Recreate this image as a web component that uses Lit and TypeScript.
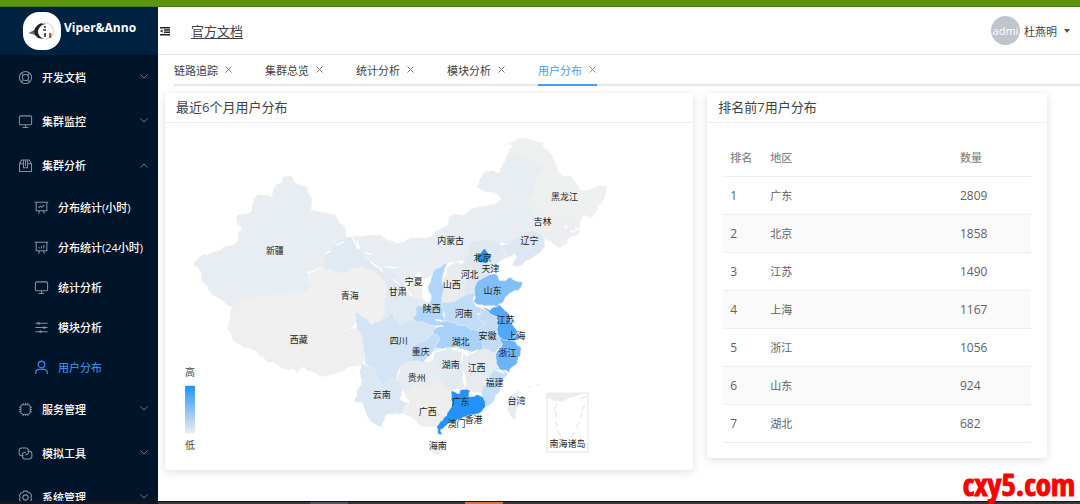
import { LitElement, html, css, svg, nothing } from "lit";
import { customElement, state } from "lit/decorators.js";
import { classMap } from "lit/directives/class-map.js";

type Point = [number, number];

const ICONS: Record<string, unknown> = {
  help: svg`<circle cx="8" cy="8" r="6.5"/><circle cx="8" cy="8" r="3.3"/><path d="M3.6 3.4l2 2M12.4 3.4l-2 2M3.6 12.6l2-2M12.4 12.6l-2-2"/>`,
  monitor: svg`<rect x="1.5" y="2" width="13" height="9.5" rx="1.5"/><path d="M8 11.5v2.5M5 14.3h6"/>`,
  box: svg`<path d="M1.6 6.2L4 2.2h8l2.400 4v8.100H1.600zM1.600 6.200h4.200M10.200 6.200h4.200M5.800 2.400v8h4.400v-8M8 2.400v6"/>`,
  line: svg`<path d="M.8 2.500h14.400M2.300 2.500v9h11.400v-9M6 11.700L4.800 14.500M10 11.700l1.200 2.800M4.800 8.500l2-2 1.700 1.300L11 5.200"/>`,
  bars: svg`<path d="M.8 2.500h14.400M2.300 2.500v9h11.400v-9M6 11.700L4.800 14.500M10 11.700l1.200 2.800M5.500 9V7.500M8 9V6.500M10.500 9V5.200"/>`,
  sliders: svg`<path d="M1.500 3.500h13M1.500 8h13M1.500 12.500h13"/><path d="M5 2.300v2.400M11 6.800v2.400M7 11.300v2.400" stroke-width="2.200"/>`,
  user: svg`<circle cx="8" cy="4.800" r="3.500"/><path d="M1.800 14.800v-1.300c0-2 1.600-3.600 3.600-3.600h5.200c2 0 3.600 1.600 3.600 3.600v1.300"/>`,
  chip: svg`<rect x="3" y="3" width="10" height="10" rx="2"/><path d="M5.500 3V1M8 3V1M10.500 3V1M5.500 15v-2M8 15v-2M10.500 15v-2M3 5.500H1M3 8H1M3 10.500H1M15 5.500h-2M15 8h-2M15 10.500h-2"/>`,
  link: svg`<path d="M6 10.300H4A2.800 2.800 0 0 1 1.200 7.500V5A2.800 2.800 0 0 1 4 2.200h4.500A2.800 2.800 0 0 1 11.300 5v1.500A2.800 2.800 0 0 1 8.500 9.300H7.800"/><path d="M10 5.700h2a2.800 2.800 0 0 1 2.800 2.800V11a2.800 2.800 0 0 1-2.800 2.800H7.500A2.800 2.800 0 0 1 4.700 11V9.500a2.800 2.800 0 0 1 2.800-2.800h.7"/>`,
  gear: svg`<path d="M5.300 2.600L6.200 1.200h3.600l.9 1.400 1.900.2 1.900 3-.7 2.200.7 2.200-1.900 3-1.900.2-.9 1.400H6.200l-.9-1.400-1.900-.2-1.900-3L2.200 8l-.7-2.200 1.900-3z"/><circle cx="8" cy="8" r="2.800"/>`,
};

interface Item { label: string; icon: string; children?: Item[]; active?: boolean }

const MENU: Item[] = [
  { label: "开发文档", icon: "help" },
  { label: "集群监控", icon: "monitor" },
  {
    label: "集群分析", icon: "box", children: [
      { label: "分布统计(小时)", icon: "line" },
      { label: "分布统计(24小时)", icon: "bars" },
      { label: "统计分析", icon: "monitor" },
      { label: "模块分析", icon: "sliders" },
      { label: "用户分布", icon: "user", active: true },
    ],
  },
  { label: "服务管理", icon: "chip" },
  { label: "模拟工具", icon: "link" },
  { label: "系统管理", icon: "gear" },
];

const TABS = ["链路追踪", "集群总览", "统计分析", "模块分析", "用户分布"];

const ROWS: [string, number][] = [
  ["广东", 2809], ["北京", 1858], ["江苏", 1490], ["上海", 1167],
  ["浙江", 1056], ["山东", 924], ["湖北", 682],
];

// name, fill, outline
const REGIONS: [string, string, string][] = [
  ["新疆", "#e8edf1", "283,177 290,176 295,183 308,188 312,198 310,211 323,212 337,217 343,225 347,236 337,243 325,255 321,267 308,273 312,287 308,292 290,292 262,296 243,299 235,309 225,303 212,295 208,288 202,282 201,272 194,265 200,257 210,254 223,248 238,241 238,235 242,230 237,216 252,212 254,202 257,196 273,197 275,187 282,183"],
  ["西藏", "#efefef", "232,308 243,299 262,296 290,292 300,293 303,303 303,317 320,322 343,333 357,328 363,337 365,357 362,367 357,365 348,368 340,372 325,377 313,372 302,367 298,373 295,369 280,367 263,357 248,348 233,340 227,328 230,318"],
  ["青海", "#f0f0f0", "308,273 321,268 347,273 362,267 377,273 388,285 387,290 385,308 382,320 372,325 363,317 357,312 355,325 343,333 320,322 303,317 303,303 300,293 308,292 312,287"],
  ["甘肃", "#e1eaf2", "345,237 355,237 361,250 372,262 385,268 397,275 405,285 408,292 414,298 424,300 430,303 417,307 413,320 400,325 392,313 382,320 385,308 387,290 388,285 377,273 362,267 347,273 321,267 325,255 337,243"],
  ["内蒙古", "#e8edf1", "355,236 383,237 400,243 417,238 433,237 450,225 449,217 455,214 463,216 480,207 502,200 493,192 478,188 485,172 500,173 510,152 518,155 537,163 545,168 537,177 533,195 528,202 533,210 535,222 533,230 527,233 510,245 500,242 488,238 480,241 470,243 465,262 447,263 435,270 425,280 420,270 413,277 405,285 397,275 385,268 372,262 361,250"],
  ["黑龙江", "#eeefef", "508,143 523,138 543,143 553,157 558,173 573,178 580,190 597,187 607,186 602,203 593,217 583,215 580,223 565,219 548,216 533,210 528,202 533,195 537,177 545,168 537,163 518,155 509,151 513,146"],
  ["吉林", "#eceef0", "533,210 548,216 565,219 580,223 580,233 570,237 562,247 557,247 543,237 533,230 535,222"],
  ["辽宁", "#dce7f2", "533,230 543,237 545,247 533,258 517,267 513,265 518,257 515,253 507,258 502,247 510,245 527,233"],
  ["河北", "#e0e8ef", "470,243 480,241 488,238 500,242 502,247 506,258 498,263 492,272 488,276 480,280 475,292 463,297 465,272 460,265 465,262"],
  ["北京", "#258ff5", "485,249 489,254 492,256 489,259 488,263 481,263 475,258 480,254"],
  ["天津", "#dce7f1", "488,263 493,265 492,272 487,270"],
  ["山西", "#e8ecef", "447,267 460,263 465,272 463,297 455,302 442,303 443,285"],
  ["陕西", "#b0d5fa", "447,263 444,273 443,285 442,303 445,320 437,327 425,323 413,320 417,307 430,303 432,297 428,287 435,270"],
  ["宁夏", "#edeff0", "410,281 415,276 418,284 423,291 424,300 414,298 408,290"],
  ["山东", "#82bef8", "475,292 480,280 488,276 497,275 500,281 506,281 512,278 523,283 522,286 513,292 503,303 497,307 480,305 474,302"],
  ["河南", "#c1dcf6", "442,303 455,302 463,297 475,293 474,302 481,308 478,318 487,324 478,331 467,326 445,321"],
  ["江苏", "#52a7f8", "483,306 493,308 500,305 510,315 515,328 518,333 510,340 500,338 498,327 497,317 489,312"],
  ["上海", "#5aabf7", "518,333 521,338 514,341 510,340"],
  ["安徽", "#c3dcf4", "481,308 489,312 497,317 498,327 500,338 503,344 495,354 483,350 478,340 478,330 487,324 478,318"],
  ["湖北", "#a9d2fa", "437,327 445,321 467,326 478,331 483,350 470,352 450,348 435,349 440,340 433,333"],
  ["浙江", "#6cb4f8", "500,338 510,340 521,347 521,355 518,363 510,373 500,370 495,357 503,344"],
  ["福建", "#c3def6", "497,367 500,370 508,374 500,392 488,407 485,402 482,393 488,378"],
  ["江西", "#e8ebed", "467,357 470,352 483,350 495,354 497,367 488,378 482,393 471,391 465,392 463,370"],
  ["湖南", "#e3eaf1", "435,350 450,348 462,352 467,357 463,370 464,389 450,392 442,383 435,367"],
  ["重庆", "#c2dcf5", "410,350 420,343 433,333 440,340 435,349 428,357 423,363 413,362"],
  ["四川", "#d3e4f4", "357,312 363,317 372,325 382,320 392,313 400,325 413,320 425,323 437,327 433,333 420,343 410,350 413,362 400,368 397,378 383,385 375,370 365,362 365,357 363,337 357,328"],
  ["贵州", "#e7ecf1", "400,368 413,362 423,363 435,360 435,367 442,383 420,388 406,395 398,383"],
  ["云南", "#dbe7f2", "362,363 375,370 383,385 397,378 403,390 400,398 410,403 403,413 385,417 383,427 373,423 367,415 363,403 355,402 357,392 362,385"],
  ["广西", "#eeeeee", "406,395 420,388 442,383 450,392 453,403 447,417 438,425 420,425 412,417 403,411 410,403"],
  ["广东", "#2492fb", "452,391 460,394 461,390 471,391 469,397 478,395 484,398 486,407 482,412 474,415 466,417 454,423 445,427 441,430 443,435 438,434 437,427 447,416 452,407"],
  ["海南", "#ebeef0", "430,446 437,441 446,441 444,449 438,455 431,452"],
  ["台湾", "#e6ebef", "518,390 520,394 515,420 508,409 511,398"],
];

const LABELS: [string, number, number][] = [
  ["新疆", 275, 251], ["西藏", 299, 340], ["青海", 350, 296], ["甘肃", 398, 292],
  ["宁夏", 414, 282], ["内蒙古", 451, 241], ["黑龙江", 565, 197], ["吉林", 543, 222],
  ["辽宁", 530, 241], ["北京", 483, 258], ["天津", 491, 269], ["河北", 470, 275],
  ["山西", 452, 285], ["山东", 493, 291], ["陕西", 432, 309], ["河南", 464, 314],
  ["江苏", 506, 320], ["安徽", 488, 336], ["上海", 517, 336], ["湖北", 461, 342],
  ["四川", 399, 341], ["重庆", 421, 352], ["浙江", 508, 353], ["湖南", 451, 365],
  ["江西", 477, 368], ["贵州", 417, 378], ["福建", 495, 383], ["云南", 382, 395],
  ["台湾", 517, 401], ["广东", 461, 402], ["广西", 428, 412], ["香港", 474, 420],
  ["澳门", 457, 424], ["海南", 438, 446], ["南海诸岛", 568, 444],
];

// Subdivides an edge with a displacement that depends only on its midpoint,
// so neighbouring regions keep a common border.
function roughen(a: Point, b: Point, depth: number): Point[] {
  const mx = (a[0] + b[0]) / 2;
  const my = (a[1] + b[1]) / 2;
  const len = Math.hypot(a[0] - b[0], a[1] - b[1]);
  if (depth === 0 || len < 3) return [a];
  const amp = Math.min(len * 0.13, 1.4);
  const mid: Point = [mx + Math.sin(mx * 12.9 + my * 7.3) * amp, my + Math.cos(mx * 5.7 + my * 11.1) * amp];
  return [...roughen(a, mid, depth - 1), ...roughen(mid, b, depth - 1)];
}

function outline(points: string): string {
  const pts = points.split(" ").map((p) => p.split(",").map(Number) as Point);
  return pts
    .flatMap((p, i) => roughen(p, pts[(i + 1) % pts.length], 3))
    .map(([x, y]) => `${x.toFixed(1)},${y.toFixed(1)}`)
    .join(" ");
}

const icon = (name: string) => html`<svg class="icon" viewBox="0 0 16 16" aria-hidden="true">${ICONS[name]}</svg>`;

@customElement("china-map")
class ChinaMap extends LitElement {
  static styles = css`
    :host { display: block; }
    svg { display: block; width: 100%; height: auto; font-family: "Noto Sans CJK SC", sans-serif; }
    .label { font-size: 9px; fill: #222; text-anchor: middle; }
    .legend { font-size: 10px; fill: #444; text-anchor: middle; }
    .region { stroke: #e9edf0; stroke-width: 0.5; stroke-linejoin: round; }
    .gap { fill: none; stroke: #fff; stroke-width: 1.4; stroke-linecap: round; }
    .inset { fill: none; stroke: #e2e2e2; stroke-width: 1; }
    .isle { fill: none; stroke: #dedede; stroke-width: 1; stroke-linecap: round; }
  `;

  render() {
    return html`<svg viewBox="165 123 529 347" role="img" aria-label="用户分布">
      <defs>
        <linearGradient id="scale" x1="0" y1="0" x2="0" y2="1">
          <stop offset="0" stop-color="#2492fb"/><stop offset="1" stop-color="#eeeeee"/>
        </linearGradient>
      </defs>
      ${REGIONS.map(([, fill, pts]) => svg`<polygon class="region" fill=${fill} points=${outline(pts)}/>`)}
      <path class="gap" d="M352 236l6 13M371 262l4 3 6 4 2 3M386 267l8 1 4-1M326 254l5-3M337 245l7-3M308 273l9-3M366 253l5 1M394 280l5 4M436 320l6 1M436 327l7-1M463 353l-1 10M464 372l2 14M483 306l8 4M478 314l1 0M466 356l11-5M437 352l9-3M496 370l8 3M485 385l3-4"/>
      <path class="gap" d="M566 226l1 2M571 231l3 1M578 228l-2 3"/>
      <rect class="inset" x="547.500" y="393.500" width="41" height="59"/>
      <path d="M548 394h33l-6 3-7 2-4 3-9-1-7-3z" fill="#ececec"/>
      <path class="isle" d="M557 405l-2 4M556 412l1 5M556 422l2 4M558 432l3 4M582 399l4-2M585 406l-2 4M583 414l-2 4M580 423l-3 4M575 433l-3 4M555 439l3 3"/>
      <path d="M529 387h2M538 385h2M484 431h2M453 427h3" stroke="#ddd"/>
      ${LABELS.map(([t, x, y]) => svg`<text class="label" x=${x} y=${y + 3}>${t}</text>`)}
      <rect x="185" y="386" width="10" height="48" rx="1" fill="url(#scale)"/>
      <text class="legend" x="190" y="376">高</text>
      <text class="legend" x="190" y="449">低</text>
    </svg>`;
  }
}

@customElement("app-root")
class AppRoot extends LitElement {
  @state() private tab = 4;
  @state() private open = 2;

  static styles = css`
    :host {
      display: flex; flex-direction: column; height: 100vh; position: relative; overflow: hidden;
      font-family: "Open Sans", "Noto Sans CJK SC", sans-serif; font-size: 11px; color: #404246; background: #fff;
    }
    * { box-sizing: border-box; }
    button { font: inherit; color: inherit; background: none; border: 0; padding: 0; margin: 0; cursor: pointer; }
    .top { flex: none; height: 7px; background: #5d960c; border-bottom: 1px solid #477a15; }
    .bottom { flex: none; height: 3px; background: linear-gradient(90deg, #111722 0 158px, #3b3637 159px 310px, #55565a 310px 348px, #3b3637 348px 465px, #d9783c 465px 503px, #3b3637 503px); border-top: 1px solid #15151a; }
    .shell { flex: 1; min-height: 0; display: flex; overflow: hidden; }
    .side { flex: none; width: 158px; background: #001529; color: #fff; overflow: hidden; }
    .brand { display: flex; align-items: flex-start; gap: 3px; height: 48px; padding: 5px 0 0 23px; background: #002140; }
    .logo { flex: none; width: 38px; height: 38px; }
    .name { font-size: 12px; font-weight: 700; line-height: 32px; }
    .item, .sub { display: flex; align-items: center; width: 100%; text-align: left; font-weight: 500; color: #fff; text-decoration: none; white-space: nowrap; }
    .item { height: 44px; padding: 0 9px 0 18px; gap: 9px; }
    .sub { height: 40px; padding-left: 34px; gap: 9px; }
    .item .text { flex: 1; }
    .icon { flex: none; width: 15px; height: 15px; fill: none; stroke: #8491a0; stroke-width: 1.1; }
    .active { color: #409eff; font-weight: 400; }
    .active .icon { stroke: #2f86ee; stroke-width: 1.4; }
    .arrow { flex: none; width: 10px; height: 10px; fill: none; stroke: #66788a; stroke-width: 1; }
    .up { transform: rotate(180deg); }
    .main { flex: 1; min-width: 0; }
    .bar { display: flex; align-items: center; height: 48px; padding: 0 10px 0 2px; border-bottom: 1px solid #e6e6e6; }
    .fold { display: flex; margin-right: 21px; }
    .fold svg { width: 10px; height: 10px; fill: #222; }
    .doc { font-size: 13px; color: #404246; text-decoration: underline; text-underline-offset: 2px; }
    .person { display: flex; align-items: center; gap: 4px; margin-left: auto; color: #444; }
    .avatar { display: flex; align-items: center; justify-content: center; width: 29px; height: 29px; border-radius: 50%; overflow: hidden; background: #c0c4cc; color: #fff; }
    .caret { margin-left: 3px; border: 3px solid transparent; border-top: 4px solid #555; border-bottom: 0; }
    .tabs { display: flex; gap: 32px; height: 31px; margin-left: 16px; border-bottom: 2px solid #e4e7ed; }
    .tab { display: flex; align-items: center; gap: 6px; height: 31px; border-bottom: 2px solid transparent; white-space: nowrap; }
    .tab svg { width: 9px; height: 9px; fill: none; stroke: #777; stroke-width: 1; }
    .tab.on { color: #409eff; border-color: #409eff; }
    .tab.on svg { stroke: #409eff; }
    .cards { display: grid; grid-template-columns: 14fr 9fr; align-items: start; gap: 14px; padding: 7px 33px 20px 7px; }
    .card { background: #fff; border-radius: 3px; box-shadow: 0 2px 10px rgba(0, 0, 0, 0.13); }
    .title { margin: 0; height: 30px; padding: 0 11px; font-size: 13px; font-weight: 400; line-height: 29px; border-bottom: 1px solid #ebeef5; color: #404246; }
    .pad { padding: 15px 16px; }
    table { width: 100%; border-collapse: collapse; table-layout: fixed; color: #606266; }
    th, td { height: 38px; padding: 0 7px; text-align: left; border-bottom: 1px solid #ebeef5; }
    th { font-weight: 500; color: #84878d; }
    td { font-size: 12px; }
    td.area { font-size: 11px; }
    tbody tr:nth-child(even) { background: #fafafa; }
    .rank { width: 40px; }
    .count { width: 78px; }
    .mark { position: absolute; right: 5px; bottom: 0; font: 700 31px/40px "Liberation Sans Narrow", "Open Sans Condensed", "DejaVu Sans Condensed", sans-serif; color: #f00; -webkit-text-stroke: 1px #f00; }
  `;

  private renderItem(item: Item, i: number) {
    const open = this.open === i && !!item.children;
    return html`
      <button class="item" aria-expanded=${open} @click=${() => (this.open = open ? -1 : i)}>
        ${icon(item.icon)}<span class="text">${item.label}</span>
        <svg class="arrow ${open ? "up" : ""}" viewBox="0 0 10 10"><path d="M1.500 2.500L5 6l3.500-3.500"/></svg>
      </button>
      ${open ? item.children!.map((c) => html`<a href="#" class=${classMap({ sub: true, active: !!c.active })}>${icon(c.icon)}<span>${c.label}</span></a>`) : nothing}`;
  }

  render() {
    return html`
      <div class="top"></div>
      <div class="shell">
        <nav class="side">
          <div class="brand">
            <svg class="logo" viewBox="0 0 38 38" aria-hidden="true">
              <rect width="38" height="38" rx="16" fill="#fff"/>
              <path d="M6 21l5-2c1-4 4-7 8-8l4 1c-4 0-7 3-8 7 0 4 2 6 6 8l-6-1-4-4z" fill="#222"/>
              <path d="M6 21l5-3 1 5z" fill="#666"/>
              <path d="M19 11.500c6-2 11 2 11.500 7 .2 5-3 8-8 8.500" fill="none" stroke="#ccc" stroke-width="1"/>
              <path d="M21 15h2M20 18h3M21 22h2M22 25v-3" stroke="#333" stroke-width="1.600"/>
              <rect x="26" y="21" width="2.400" height="5" fill="#e04040"/>
            </svg>
            <span class="name">Viper&amp;Anno</span>
          </div>
          ${MENU.map((m, i) => this.renderItem(m, i))}
        </nav>
        <div class="main">
          <header class="bar">
            <button class="fold" aria-label="折叠菜单">
              <svg viewBox="0 0 10 10"><path d="M0 1h10v1.400H0zM4 3.300h6v1.400H4zM4 5.600h6V7H4zM0 8h10v1.400H0zM0 5l2.500-1.800v3.600z"/></svg>
            </button>
            <a class="doc" href="#">官方文档</a>
            <button class="person"><span class="avatar">admi</span><span>杜燕明</span><span class="caret"></span></button>
          </header>
          <div class="tabs" role="tablist">
            ${TABS.map((t, i) => html`<button role="tab" aria-selected=${i === this.tab} class=${classMap({ tab: true, on: i === this.tab })} @click=${() => (this.tab = i)}>
              <span>${t}</span><svg viewBox="0 0 9 9"><path d="M1.500 1.500l6 6M7.500 1.500l-6 6"/></svg></button>`)}
          </div>
          <main class="cards">
            <section class="card">
              <h2 class="title">最近6个月用户分布</h2>
              <china-map></china-map>
            </section>
            <section class="card">
              <h2 class="title">排名前7用户分布</h2>
              <div class="pad">
                <table>
                  <thead><tr><th class="rank">排名</th><th>地区</th><th class="count">数量</th></tr></thead>
                  <tbody>${ROWS.map(([area, n], i) => html`<tr><td>${i + 1}</td><td class="area">${area}</td><td>${n}</td></tr>`)}</tbody>
                </table>
              </div>
            </section>
          </main>
        </div>
      </div>
      <div class="bottom"></div>
      <div class="mark">cxy5.com</div>
    `;
  }
}
